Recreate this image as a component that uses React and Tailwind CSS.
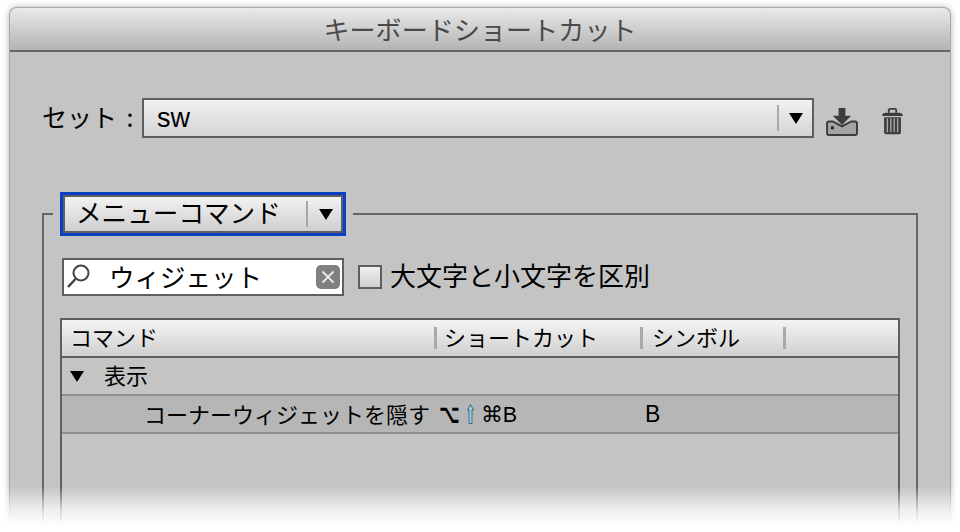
const jp = "font-['Noto_Sans_CJK_JP','Liberation_Sans',sans-serif]";

const Triangle = ({ className }) => (
  <svg className={className} width="14" height="11" viewBox="0 0 14 11">
    <path d="M0 0h14L7 11z" fill="#000" />
  </svg>
);

const Divider = ({ className }) => <div className={`w-[2px] bg-[#a9a9a9] ${className}`} />;

const DownloadIcon = () => (
  <svg width="33" height="28" viewBox="0 0 34 29">
    <path d="M13 0h7v8h6l-9.500 9.500L7 8h6z" fill="#3c3c3c" />
    <path d="M7 14H3a2 2 0 0 0-2 2v10a2 2 0 0 0 2 2h27a2 2 0 0 0 2-2V16a2 2 0 0 0-2-2h-4l-9.500 5z" fill="#a4a4a4" stroke="#3c3c3c" strokeWidth="2" />
    <rect x="5" y="19" width="3" height="3" fill="#222" />
  </svg>
);

const TrashIcon = () => (
  <svg width="23" height="28" viewBox="0 0 24 30">
    <path d="M8 5V2.500A1.500 1.500 0 0 1 9.500 1h5A1.500 1.500 0 0 1 16 2.500V5" fill="none" stroke="#3c3c3c" strokeWidth="2" />
    <path d="M1 8.500Q1 5 5 5h14q4 0 4 3.500z" fill="#3c3c3c" />
    <path d="M3 10h18v16a2 2 0 0 1-2 2H5a2 2 0 0 1-2-2z" fill="#3c3c3c" />
    <path d="M6.500 11v15M10.200 11v15M13.800 11v15M17.500 11v15" stroke="#a8a8a8" strokeWidth="1.500" />
  </svg>
);

const SearchIcon = () => (
  <svg width="26" height="28" viewBox="0 0 26 28">
    <circle cx="15" cy="10" r="7.500" fill="none" stroke="#444" strokeWidth="2" />
    <path d="M9.500 16L2 24" stroke="#444" strokeWidth="2.500" />
  </svg>
);

const ClearIcon = () => (
  <svg width="24" height="24" viewBox="0 0 24 24">
    <rect width="24" height="24" rx="5" fill="#808080" />
    <path d="M6.500 6.500l11 11M17.500 6.500l-11 11" stroke="#e8e8e8" strokeWidth="1.800" />
  </svg>
);

const ShiftArrow = () => (
  <svg className="ml-[7px] mr-[7px]" width="7" height="20" viewBox="0 0 7 20" aria-label="shift">
    <path d="M3.500 0.500L0.500 6h1.500v13.500h3V6h1.500z" fill="#9ccbe0" stroke="#2c566c" strokeWidth="0.800" />
  </svg>
);

export default function App() {
  return (
    <div className={`relative h-[532px] w-[960px] overflow-hidden bg-white pl-[9px] pt-[7px] text-black ${jp}`}>
      <div className="h-[525px] w-[942px] overflow-hidden rounded-t-[8px] border border-b-0 border-[#a6a6a6] bg-[#c4c4c4] shadow-[0_0_6px_rgba(0,0,0,0.3)]">
        {/* Title bar */}
        <div className="flex h-[44px] items-center justify-center border-b-2 border-[#666] bg-linear-to-b from-[#eaeaea] to-[#b4b4b4] text-[26px] leading-none tracking-[0.1px] text-[#4a4a4a]">
          キーボードショートカット
        </div>

        {/* Set row */}
        <div className="flex items-center pl-[32px] pt-[46px]">
          <div className="w-[100px] whitespace-pre pb-[3px] text-[25px] leading-none [word-spacing:4px]">セット :</div>
          <div className="flex h-[40px] w-[672px] items-center border-2 border-[#5f5f5f] bg-linear-to-b from-[#f2f2f2] to-[#d4d4d4] pl-[13px]">
            <span className="flex-1 font-['Liberation_Sans',sans-serif] text-[27px] leading-none">sw</span>
            <Divider className="h-[26px]" />
            <Triangle className="ml-[10px] mr-[9px]" />
          </div>
          <div className="ml-[12px] mt-[8px]">
            <DownloadIcon />
          </div>
          <div className="ml-[22px] mt-[8px]">
            <TrashIcon />
          </div>
        </div>

        {/* Group box */}
        <fieldset className="ml-[32px] mt-[54px] h-[400px] w-[876px] border-2 border-[#666] p-0">
          <legend className="ml-[9px] px-[7px]">
            <div className="flex h-[44px] w-[286px] items-center border-[3px] border-[#0a3fc4] bg-[#0a3fc4]">
              <div className="flex h-full w-full items-center border-2 border-[#5f5f5f] bg-linear-to-b from-[#f2f2f2] to-[#cfcfcf] pl-[11px]">
                <span className="w-[230px] whitespace-nowrap pb-[5px] text-[25.600px] leading-none">メニューコマンド</span>
                <Divider className="h-[26px]" />
                <Triangle className="ml-[11px]" />
              </div>
            </div>
          </legend>

          {/* Search row */}
          <div className="flex items-center pl-[18px] pt-[22px]">
            <div className="flex h-[38px] w-[282px] items-center border-2 border-[#5f5f5f] bg-white pl-[2px] pr-[2px]">
              <SearchIcon />
              <span className="ml-[17px] flex-1 pb-[3px] text-[25.500px] leading-none">ウィジェット</span>
              <ClearIcon />
            </div>
            <div className="ml-[14px] h-[24px] w-[24px] border-2 border-[#5f5f5f] bg-linear-to-b from-[#f0f0f0] to-[#d0d0d0]" />
            <span className="ml-[8px] pb-[5px] text-[26px] leading-none">大文字と小文字を区別</span>
          </div>

          {/* Table */}
          <div className="ml-[16px] mt-[22px] h-[300px] w-[840px] border-2 border-[#5f5f5f] text-[22px] leading-none">
            <div className="flex h-[38px] items-center border-b-2 border-[#5f5f5f] bg-linear-to-b from-[#f4f4f4] to-[#d0d0d0]">
              <div className="w-[372px] pb-[4px] pl-[8px]">コマンド</div>
              <Divider className="h-[22px] w-[3px]" />
              <div className="w-[203px] pb-[4px] pl-[7px]">ショートカット</div>
              <Divider className="h-[22px] w-[3px]" />
              <div className="w-[140px] pb-[4px] pl-[9px]">シンボル</div>
              <Divider className="h-[22px] w-[3px]" />
            </div>
            <div className="flex h-[38px] items-center border-b-2 border-[#8f8f8f] pl-[8px]">
              <Triangle />
              <span className="ml-[20px] pb-[5px]">表示</span>
            </div>
            <div className="flex h-[38px] items-center border-b-2 border-[#8f8f8f] bg-[#b6b6b6] pl-[82px]">
              <span className="w-[295px] whitespace-nowrap pb-[3px]">コーナーウィジェットを隠す</span>
              <span className="flex w-[206px] items-center font-['DejaVu_Sans',sans-serif] text-[18px]">
                <span className="inline-block scale-y-150 font-bold">⌥</span>
                <ShiftArrow />
                <span className="pt-[3px] font-['Liberation_Sans',sans-serif] text-[21.500px]">⌘B</span>
              </span>
              <span className="font-['Liberation_Sans',sans-serif] text-[23px]">B</span>
            </div>
          </div>
        </fieldset>
      </div>

      {/* Bottom fade */}
      <div className="pointer-events-none absolute inset-x-0 bottom-0 h-[46px] bg-linear-to-b from-transparent via-white/70 via-50% to-white to-85%" />
    </div>
  );
}
